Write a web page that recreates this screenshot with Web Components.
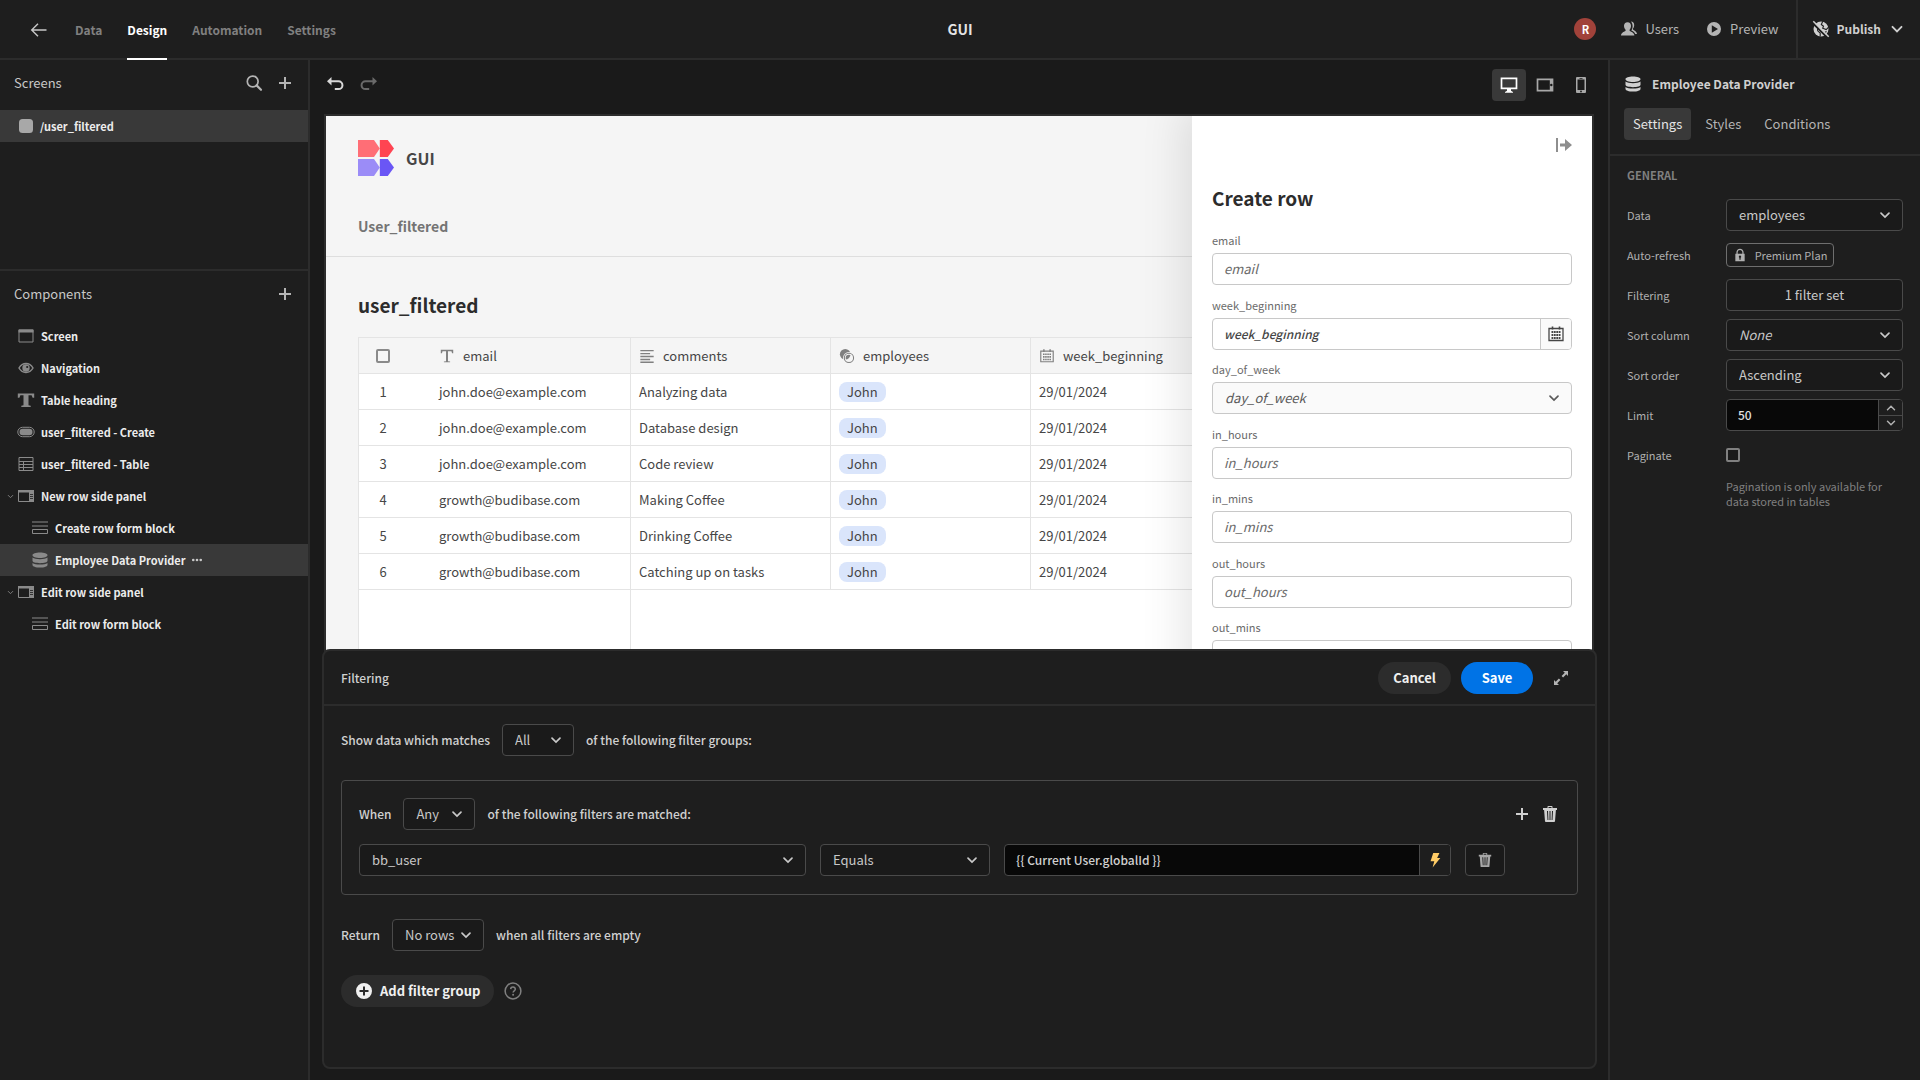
<!DOCTYPE html>
<html lang="en">
<head>
<meta charset="utf-8">
<title>GUI - Design</title>
<style>
  html, body { height: 100%; margin: 0; }
  body { background: #1a1a1a; color: #c8c8c8; font: 400 13px/20px "Noto Sans CJK SC", "Noto Sans", sans-serif; overflow: hidden; }
</style>
</head>
<body>
<builder-app></builder-app>
<script>
const base = `
  *, *::before, *::after { box-sizing: border-box; }
  button, input, select { font: inherit; color: inherit; margin: 0; }
  button { background: none; border: 0; padding: 0; display: inline-flex; align-items: center; justify-content: center; }
  a { color: inherit; text-decoration: none; }
  h1, h2, h3, p { margin: 0; font: inherit; }
  bb-icon { flex: none; }
`;
function define(name, render) {
  customElements.define(name, class extends HTMLElement {
    connectedCallback() {
      if (this.shadowRoot) return;
      const root = this.attachShadow({ mode: 'open' });
      root.innerHTML = `<style>${base}</style>` + render(this);
    }
  });
}

/* Icons, drawn on an 18 x 18 grid */
const icons = {
  back: '<path d="M16.5 9H2M8 2.7 1.7 9 8 15.3" fill="none" stroke="currentColor" stroke-width="1.4"/>',
  search: '<circle cx="7.7" cy="7.5" r="5.4" fill="none" stroke="currentColor" stroke-width="1.7"/><path d="m11.6 11.4 4.4 4.4" stroke="currentColor" stroke-width="2.2" stroke-linecap="round"/>',
  plus: '<path d="M9 3v12M3 9h12" stroke="currentColor" stroke-width="2"/>',
  undo: '<path d="M4 5.200h8.500a3.900 3.900 0 0 1 0 7.900H8.800" fill="none" stroke="currentColor" stroke-width="2"/><path d="M5.500 1v8.400L1 5.200z" fill="currentColor"/>',
  redo: '<path d="M14 5.200H5.500a3.900 3.900 0 0 0 0 7.900h3.700" fill="none" stroke="currentColor" stroke-width="2"/><path d="M12.500 1v8.400L17 5.200z" fill="currentColor"/>',
  square: '<rect x="2" y="2" width="14" height="14" rx="3.5" fill="currentColor"/>',
  screen: '<path d="M2 3h14v12H2z" fill="none" stroke="currentColor"/><path d="M1.5 2.5h15v3h-15z" fill="currentColor"/>',
  eye: '<path d="M2 9c3.4-6 10.600-6 14 0-3.4 6-10.600 6-14 0z" fill="none" stroke="currentColor" stroke-width="1.500"/><circle cx="9" cy="9" r="3.700" fill="currentColor"/><circle cx="10.200" cy="8" r="1.100" fill="#1e1e1e"/>',
  heading: '<path d="M.800 2.500h16.400v4.200h-1.600L14.600 4.300H11.500v10l2.200.5V16H4.300v-1.200l2.200-.5v-10H3.400L2.400 6.700H.800z" fill="currentColor"/>',
  pill: '<rect x=".800" y="4.300" width="16.400" height="9.400" rx="4.700" fill="none" stroke="currentColor"/><rect x="2.500" y="5.800" width="13" height="6.400" rx="3.200" fill="currentColor"/>',
  table: '<path d="M2 2.500h14v13H2zM2 6.500h14M2 9.500h14M2 12.500h14M6.500 6.500v9" fill="none" stroke="currentColor"/>',
  sidepanel: '<path d="M1.500 3.500h15v11h-15z" fill="none" stroke="currentColor"/><path d="M1 3h16v2.500H1zM12 3h5v12h-5z" fill="currentColor"/><path d="M13 7.500h3M13 9.500h3M13 11.500h3" stroke="#1e1e1e" stroke-width=".8"/>',
  form: '<path d="M1 3h16M1 7h16" stroke="currentColor"/><path d="M1.500 10.500h15v4h-15z" fill="none" stroke="currentColor"/>',
  data: '<path d="M1.500 4.200c0-1.600 3.200-2.700 7.500-2.700s7.500 1.100 7.500 2.700S13.300 6.900 9 6.900 1.500 5.800 1.500 4.200zM1.500 6.600c1.500 1.300 4.300 1.700 7.500 1.700s6-.4 7.500-1.700v3.200c0 1.400-3.300 2.400-7.500 2.400s-7.500-1-7.500-2.400zM1.500 11.900c1.500 1.300 4.300 1.700 7.500 1.700s6-.4 7.500-1.700V14c0 1.500-3.300 2.600-7.500 2.600S1.500 15.500 1.500 14z" fill="currentColor"/>',
  more: '<g fill="currentColor"><circle cx="4.200" cy="9" r="1.700"/><circle cx="9" cy="9" r="1.700"/><circle cx="13.800" cy="9" r="1.700"/></g>',
  down: '<path d="m4.500 6.800 4.500 4.500 4.500-4.500" fill="none" stroke="currentColor" stroke-width="1.900" stroke-linecap="round"/>',
  up: '<path d="m4.500 11.300 4.500-4.500 4.500 4.500" fill="none" stroke="currentColor" stroke-width="1.900" stroke-linecap="round"/>',
  users: '<path d="M7.500 2.200c2.300 0 3.500 1.500 3.500 3.600 0 1.800-.6 3-1.400 3.900v1.100c.2.700 4.600 1.300 4.800 4.700H1c.2-3.400 4.300-4 4.600-4.700V9.700C4.700 8.800 4 7.600 4 5.800c0-2.100 1.300-3.600 3.500-3.600z" fill="currentColor"/><path d="M11 1.400c2 .1 3.200 1.500 3.200 3.500 0 1.500-.5 2.800-1.200 3.600v1c.4.700 3.800 1.500 4 4.500h-1.800c-.6-1.800-2.400-2.800-3.900-3.400.9-1.300 1.300-2.800 1.300-4.500 0-1.900-.6-3.400-1.600-4.700z" fill="currentColor"/>',
  play: '<path fill-rule="evenodd" d="M9 2a7 7 0 1 0 0 14A7 7 0 0 0 9 2zM6.800 5.200 13 9l-6.200 3.800z" fill="currentColor"/>',
  globe: '<path d="M9 1.500a7.500 7.500 0 1 0 0 15 7.500 7.500 0 0 0 0-15z" fill="currentColor"/><path d="M10.800 1.300 9.300 4.500l2.200 1.700-.8 2 3.500 1.400 2.400-2.500M2 4.800l3.500 3 .2 3 2.500 2.200v3.500M12 13l2.500-1.500" fill="none" stroke="#1e1e1e" stroke-width="1.100"/><path d="m1 3.200 14 14" stroke="#1e1e1e" stroke-width="2"/><path d="m1.300 1.300 15.400 15.400" stroke="currentColor" stroke-width="1.500"/>',
  desktop: '<path d="M1.500 2.300h15v10h-15z" fill="none" stroke="currentColor" stroke-width="1.700"/><path d="M7 12.500h4v2.300l2 1.200v.8H5V16l2-1.200z" fill="currentColor"/>',
  tablet: '<path d="M1.500 3.300h15v11.400h-15z" fill="none" stroke="currentColor" stroke-width="1.700"/><path d="M13.800 3h3v12h-3z" fill="currentColor"/><circle cx="15.300" cy="9" r="1.200" fill="#1a1a1a"/>',
  phone: '<path fill-rule="evenodd" d="M5 1h8a1 1 0 0 1 1 1v14a1 1 0 0 1-1 1H5a1 1 0 0 1-1-1V2a1 1 0 0 1 1-1zm.5 2.600v10.300h7V3.600zM7.500 2h3v.8h-3zM9 14.600a.9.9 0 1 0 0 1.800.9.9 0 0 0 0-1.800z" fill="currentColor"/>',
  close: '<path d="M2 2h2v14H2zM6 7.500h5V3l7 6-7 6v-4.500H6z" fill="currentColor"/>',
  lock: '<path d="M5.200 8V5.600a3.800 3.800 0 0 1 7.600 0V8" fill="none" stroke="currentColor" stroke-width="1.600"/><path fill-rule="evenodd" d="M3 7.500h12V17H3zm6 2.200a1.500 1.500 0 0 0-.8 2.800V15h1.600v-2.500a1.500 1.500 0 0 0-.8-2.800z" fill="currentColor"/>',
  text: '<path d="M2 2h14v3.800h-1.300L14 3.600h-3.900v11.200l2.400.4V16H5.500v-.8l2.400-.4V3.600H4l-.7 2.200H2z" fill="currentColor"/>',
  lines: '<path d="M1.500 3h15M1.500 6.300h11M1.500 9.600h15M1.500 12.900h11M1.500 16h15" stroke="currentColor" stroke-width="1.500"/>',
  link: '<circle cx="7" cy="7" r="6" fill="currentColor"/><circle cx="11.200" cy="11.200" r="5.200" fill="none" stroke="#f5f5f5" stroke-width="3"/><circle cx="11.200" cy="11.200" r="5.200" fill="none" stroke="currentColor" stroke-width="1.200"/>',
  calendar: '<path d="M2 3.500h14v12H2z" fill="none" stroke="currentColor" stroke-width="1.300"/><path d="M5.500 1.500v3M12.500 1.500v3" stroke="currentColor" stroke-width="1.600"/><path d="M4.500 7h9M4.500 10h9M4.500 13h9" stroke="currentColor" stroke-width="1.800" stroke-dasharray="1.800 .6"/>',
  expand: '<path d="M11 2h5v5l-1.700-1.700-3.200 3.200-1.500-1.500 3.200-3.200zM7 16H2v-5l1.700 1.700 3.200-3.200 1.500 1.500-3.200 3.200z" fill="currentColor"/>',
  trash: '<path fill-rule="evenodd" d="M6.500 3V1.800c0-.5.3-.8.8-.8h3.400c.5 0 .8.300.8.800V3H16v2h-1.100l-.9 11.200a.9.9 0 0 1-.9.800H4.900a.9.9 0 0 1-.9-.8L3.100 5H2V3zm1 0h3V2h-3zM6 6l.5 9h.9L7 6zm2.500 0v9h1V6zM11 6l-.4 9h.9L12 6z" fill="currentColor"/>',
  bolt: '<path d="M7 1h7l-2.600 5.700H15L6.300 17.500l1.900-7.200H4z" fill="currentColor"/>',
  addcircle: '<path fill-rule="evenodd" d="M9 1a8 8 0 1 0 0 16A8 8 0 0 0 9 1zM8 4.500h2V8h3.500v2H10v3.500H8V10H4.500V8H8z" fill="currentColor"/>',
  help: '<circle cx="9" cy="9" r="7.900" fill="none" stroke="currentColor" stroke-width="1.500"/><path d="M6.700 7.100c.1-2.800 4.700-2.700 4.600.1 0 1.500-2.200 1.700-2.200 3.300" fill="none" stroke="currentColor" stroke-width="1.500"/><circle cx="9.100" cy="12.700" r="1" fill="currentColor"/>',
  logo: '<path d="M0 0h8l2.900 4.300L8 8.500H0z" fill="#ff6e76"/><path d="M10.900 0h4L18 4.300l-3.100 4.200h-4z" fill="#ff4452"/><path d="M0 9.500h8l2.900 4.300L8 18H0z" fill="#9b8cf7"/><path d="M10.900 9.500h4l3.100 4.300-3.100 4.200h-4z" fill="#6a56f5"/>'
};
define('bb-icon', el => {
  const s = el.getAttribute('size') || 18;
  return `<style>:host{display:inline-flex;width:${s}px;height:${s}px}</style>
  <svg viewBox="0 0 18 18" width="${s}" height="${s}" aria-hidden="true">${icons[el.getAttribute('name')]}</svg>`;
});

/* Drop-down: <ui-select value="All" name="accessible name"> */
const selectCss = `
  .pick { position: relative; display: block; min-width: 0; flex: 1; color: #c8c8c8; }
  .pick select { appearance: none; display: block; width: 100%; height: 32px; padding: 0 22px 0 12px; background: #1a1a1a; border: 1px solid #4a4a4a; border-radius: 4px; outline: 0; }
  .pick bb-icon { position: absolute; right: 10px; top: 8px; pointer-events: none; }
  .pick.italic select { font-style: italic; }
`;
const pick = (id, value, name, italic) => `<span class="pick${italic ? ' italic' : ''}"><select id="${id}" ${name ? `aria-label="${name}"` : ''}><option>${value}</option></select><bb-icon name="down" size="16"></bb-icon></span>`;
define('ui-select', el => `<style>${selectCss} :host{display:block;min-width:0}</style>${pick('s', el.getAttribute('value'), el.getAttribute('name'))}`);

define('top-bar', () => `
<style>
  :host { display: grid; grid-template-columns: 1fr auto 1fr; align-items: stretch; height: 60px; background: #1e1e1e; border-bottom: 2px solid #2c2c2c; }
  nav { display: flex; gap: 25px; padding-left: 30px; font-size: 12px; font-weight: 700; color: #808080; }
  nav a { display: flex; align-items: center; margin-bottom: -2px; }
  nav a.back { margin-right: 2px; color: #c8c8c8; }
  nav a[aria-current] { color: #fff; border-bottom: 2px solid #fff; padding-top: 2px; }
  h1 { align-self: center; font-size: 14px; font-weight: 700; color: #e4e4e4; }
  .right { display: flex; justify-content: flex-end; align-items: stretch; }
  .right button { gap: 7px; }
  .avatar { align-self: center; width: 22px; height: 22px; border-radius: 50%; background: #a1423a; color: #fff; font-size: 11px; font-weight: 700; line-height: 22px; text-align: center; margin-right: 24px; }
  .users { margin-right: 26px; color: #b4b4b4; } .preview { margin-right: 17px; color: #b4b4b4; }
  .publish { border-left: 2px solid #2c2c2c; padding: 0 14px; font-size: 12px; font-weight: 700; color: #d0d0d0; }
</style>
<nav><a class="back" href="#" aria-label="Back"><bb-icon name="back"></bb-icon></a><a href="#">Data</a><a href="#" aria-current="page">Design</a><a href="#">Automation</a><a href="#">Settings</a></nav>
<h1>GUI</h1>
<div class="right"><span class="avatar">R</span>
<button class="users"><bb-icon name="users"></bb-icon>Users</button>
<button class="preview"><bb-icon name="play"></bb-icon>Preview</button>
<button class="publish"><bb-icon name="globe"></bb-icon>Publish<bb-icon name="down"></bb-icon></button></div>`);

define('tree-item', el => `
<style>
  :host { display: flex; align-items: center; height: 32px; padding-left: 6px; font-size: 11px; font-weight: 700; color: #ececec; }
  :host([selected]) { background: #393939; }
  .chev { width: 11px; display: inline-flex; margin-right: ${el.hasAttribute('child') ? 14 : 0}px; color: #808080; }
  .ic { color: #8a8a8a; margin-right: 6px; }
  :host([screen]) .ic { color: #a8a8a8; margin-right: 5px; }
  .more { margin-left: 4px; color: #c8c8c8; }
</style>
<span class="chev">${el.hasAttribute('open') ? '<bb-icon name="down" size="9"></bb-icon>' : ''}</span>
<bb-icon class="ic" name="${el.getAttribute('icon')}"></bb-icon><slot></slot>
${el.hasAttribute('more') ? '<button class="more" aria-label="More actions"><bb-icon name="more" size="14"></bb-icon></button>' : ''}`);

define('left-panel', () => `
<style>
  :host { display: flex; flex-direction: column; width: 310px; background: #1e1e1e; border-right: 2px solid #2c2c2c; }
  header { display: flex; align-items: center; gap: 13px; padding: 0 14px; color: #c8c8c8; }
  header h2 { flex: 1; }
  header button { color: #b4b4b4; }
  .screens { height: 211px; border-bottom: 2px solid #2c2c2c; }
  .screens header { height: 50px; padding-bottom: 4px; }
  .tree { padding-top: 1px; }
  .components header { height: 48px; padding-bottom: 2px; }
</style>
<section class="screens"><header><h2>Screens</h2><button aria-label="Search screens"><bb-icon name="search"></bb-icon></button><button aria-label="Add screen"><bb-icon name="plus"></bb-icon></button></header>
<tree-item icon="square" selected screen>/user_filtered</tree-item></section>
<section class="components"><header><h2>Components</h2><button aria-label="Add component"><bb-icon name="plus"></bb-icon></button></header>
<div class="tree">
<tree-item icon="screen">Screen</tree-item>
<tree-item icon="eye">Navigation</tree-item>
<tree-item icon="heading">Table heading</tree-item>
<tree-item icon="pill">user_filtered - Create</tree-item>
<tree-item icon="table">user_filtered - Table</tree-item>
<tree-item icon="sidepanel" open>New row side panel</tree-item>
<tree-item icon="form" child>Create row form block</tree-item>
<tree-item icon="data" child selected more>Employee Data Provider</tree-item>
<tree-item icon="sidepanel" open>Edit row side panel</tree-item>
<tree-item icon="form" child>Edit row form block</tree-item>
</div></section>`);

define('canvas-toolbar', () => `
<style>
  :host { box-sizing: border-box; display: flex; align-items: center; height: 54px; padding: 0 10px 4px 16px; }
  .undo { color: #d8d8d8; margin-right: 16px; } .redo { color: #6a6a6a; margin-right: auto; }
  .devices { display: flex; gap: 2px; color: #a8a8a8; }
  .devices button { width: 34px; height: 32px; border-radius: 4px; }
  .devices [aria-pressed=true] { background: #393939; color: #fff; }
</style>
<button class="undo" aria-label="Undo"><bb-icon name="undo"></bb-icon></button><button class="redo" aria-label="Redo"><bb-icon name="redo"></bb-icon></button>
<div class="devices"><button aria-label="Desktop" aria-pressed="true"><bb-icon name="desktop"></bb-icon></button><button aria-label="Tablet"><bb-icon name="tablet"></bb-icon></button><button aria-label="Mobile"><bb-icon name="phone"></bb-icon></button></div>`);

const rows = [['john.doe@example.com', 'Analyzing data'], ['john.doe@example.com', 'Database design'], ['john.doe@example.com', 'Code review'], ['growth@budibase.com', 'Making Coffee'], ['growth@budibase.com', 'Drinking Coffee'], ['growth@budibase.com', 'Catching up on tasks']];
define('data-grid', () => `
<style>
  :host { display: flex; flex-direction: column; flex: 1; background: #fff; border: solid #e4e4e4; border-width: 1px 0 0 1px; color: #464646; }
  table { width: 100%; table-layout: fixed; border-spacing: 0; }
  th, td { height: 36px; padding: 0 8px; text-align: left; font-weight: 400; border: solid #e4e4e4; border-width: 0 1px 1px 0; white-space: nowrap; }
  thead th { background: #f5f5f5; }
  tr > :first-child { border-right: 0; padding: 0; }
  .no { display: block; width: 48px; text-align: center; }
  thead .no { display: flex; justify-content: center; }
  input { appearance: none; width: 14px; height: 14px; border: 2px solid #8a8a8a; border-radius: 2px; background: #f5f5f5; }
  .h { display: flex; align-items: center; gap: 8px; }
  .h bb-icon { color: #808080; }
  .tag { display: inline-block; height: 20px; line-height: 20px; padding: 0 8px; border-radius: 8px; background: #dae5fb; vertical-align: middle; }
  .rest { flex: 1; width: 272px; border-right: 1px solid #e4e4e4; }
</style>
<table><colgroup><col style="width:72px"><col style="width:200px"><col style="width:200px"><col style="width:200px"><col></colgroup>
<thead><tr><th><span class="no"><input type="checkbox" aria-label="Select all rows"></span></th>
<th><span class="h"><bb-icon name="text" size="16"></bb-icon>email</span></th><th><span class="h"><bb-icon name="lines" size="16"></bb-icon>comments</span></th><th><span class="h"><bb-icon name="link" size="16"></bb-icon>employees</span></th><th><span class="h"><bb-icon name="calendar" size="16"></bb-icon>week_beginning</span></th></tr></thead>
<tbody>${rows.map((r, i) => `<tr><td><span class="no">${i + 1}</span></td><td>${r[0]}</td><td>${r[1]}</td><td><span class="tag">John</span></td><td>29/01/2024</td></tr>`).join('')}</tbody></table>
<div class="rest"></div>`);

define('form-field', el => {
  const n = el.getAttribute('name'), t = el.getAttribute('type') || 'text';
  const body = t === 'select' ? pick('f', n, '', true)
    : `<span class="box"><input id="f" class="${t}" placeholder="${n}">${t === 'date' ? '<button aria-label="Open calendar"><bb-icon name="calendar"></bb-icon></button>' : ''}</span>`;
  return `<style>${selectCss}
  :host { display: flex; flex-direction: column; flex: 1; }
  label { height: 24px; font-size: 11px; line-height: 22px; color: #6a6a6a; }
  .box { display: flex; height: 32px; background: #fff; border: 1px solid #c8c8c8; border-radius: 4px; overflow: hidden; }
  input { flex: 1; min-width: 0; border: 0; outline: 0; padding: 0 11px; background: none; font-style: italic; }
  input::placeholder { color: #6a6a6a; opacity: 1; }
  input.date { font-size: 12px; font-weight: 500; } input.date::placeholder { color: #464646; }
  .box button { width: 31px; border-left: 1px solid #c8c8c8; background: #fafafa; color: #464646; }
  .pick { flex: none; color: #5a5a5a; } .pick select { background: #fafafa; border-color: #c8c8c8; }
  </style><label for="f">${n}</label>${body}`;
});

define('row-panel', () => `
<style>
  :host { box-sizing: border-box; display: flex; flex-direction: column; width: 400px; padding: 20px; background: #fff; color: #464646; box-shadow: 0 0 40px 10px rgba(0,0,0,.1); }
  .x { align-self: flex-end; color: #8e8e8e; }
  h2 { font-size: 19px; line-height: 32px; font-weight: 700; color: #2c2c2c; margin: 28px 0 15px; }
  .fields { display: flex; flex-direction: column; height: 452px; flex: none; }
</style>
<button class="x" aria-label="Close panel"><bb-icon name="close"></bb-icon></button>
<h2>Create row</h2>
<div class="fields"><form-field name="email"></form-field><form-field name="week_beginning" type="date"></form-field><form-field name="day_of_week" type="select"></form-field><form-field name="in_hours"></form-field><form-field name="in_mins"></form-field><form-field name="out_hours"></form-field><form-field name="out_mins"></form-field></div>`);

define('app-preview', () => `
<style>
  :host { display: flex; flex-direction: column; flex: 1; position: relative; overflow: hidden; margin: 0 14px 24px; border: 2px solid #2c2c2c; background: #f5f5f5; color: #464646; }
  header { height: 141px; padding: 24px 32px 0; border-bottom: 1px solid #dedede; }
  .brand { display: flex; align-items: center; gap: 12px; height: 36px; font-size: 16px; font-weight: 700; }
  .link { display: block; margin-top: 39px; font-size: 14px; line-height: 22px; font-weight: 700; color: #747474; }
  h2 { padding: 32px 32px 0; font-size: 19px; line-height: 32px; height: 80px; font-weight: 700; color: #2c2c2c; }
  data-grid { margin: 0 32px; }
  row-panel { position: absolute; top: 0; right: 0; bottom: 0; }
</style>
<header><div class="brand"><bb-icon name="logo" size="36"></bb-icon><span>GUI</span></div><a class="link" href="#">User_filtered</a></header>
<h2>user_filtered</h2><data-grid></data-grid><row-panel></row-panel>`);

define('filter-drawer', () => `
<style>
  :host { box-sizing: border-box; display: flex; flex-direction: column; height: 420px; background: #1e1e1e; border: 2px solid #2c2c2c; border-radius: 8px; color: #d0d0d0; font-size: 12px; font-weight: 500; }
  header { display: flex; align-items: center; height: 55px; padding: 0 25px 0 17px; border-bottom: 2px solid #2c2c2c; }
  header h2 { flex: 1; }
  .btn { height: 32px; border-radius: 16px; padding: 0 15px; font-size: 13px; font-weight: 700; color: #f0f0f0; background: #2c2c2c; }
  .cancel { width: 73px; margin-right: 10px; } .save { width: 72px; background: #0073e6; color: #fff; margin-right: 19px; }
  .expand { color: #b4b4b4; }
  .body { display: flex; flex-direction: column; align-items: flex-start; padding: 18px 17px 0 17px; }
  .line { display: flex; align-items: center; gap: 12px; height: 32px; }
  ui-select { font-size: 13px; font-weight: 400; }
  .w72 { width: 72px; } .w92 { width: 92px; }
  .group { align-self: stretch; margin: 24px 0; padding: 17px; height: 115px; border: 1px solid #4a4a4a; border-radius: 4px; }
  .group .acts { display: flex; gap: 10px; margin-left: auto; padding-right: 1px; color: #d0d0d0; }
  .filter { display: grid; grid-template-columns: 1fr 170px 1fr 40px; gap: 14px; margin: 14px 55px 0 0; }
  .bind { display: flex; height: 32px; border: 1px solid #4a4a4a; border-radius: 4px; overflow: hidden; background: #080808; }
  .bind input { flex: 1; min-width: 0; border: 0; outline: 0; background: none; padding: 0 11px; }
  .bind button { width: 31px; border-left: 1px solid #4a4a4a; background: #1e1e1e; color: #ffcc66; }
  .del { border: 1px solid #4a4a4a; border-radius: 4px; color: #a8a8a8; background: #1a1a1a; }
  .add { gap: 7px; padding: 0 14px; }
  .foot { display: flex; align-items: center; gap: 10px; margin-top: 24px; } .foot .help { color: #808080; }
</style>
<header><h2>Filtering</h2><button class="btn cancel">Cancel</button><button class="btn save">Save</button><button class="expand" aria-label="Expand"><bb-icon name="expand"></bb-icon></button></header>
<div class="body">
<div class="line"><span>Show data which matches</span><ui-select class="w72" value="All" name="Group match"></ui-select><span>of the following filter groups:</span></div>
<div class="group"><div class="line"><span>When</span><ui-select class="w72" value="Any" name="Filter match"></ui-select><span>of the following filters are matched:</span>
<span class="acts"><button aria-label="Add filter"><bb-icon name="plus"></bb-icon></button><button aria-label="Delete group"><bb-icon name="trash"></bb-icon></button></span></div>
<div class="filter"><ui-select value="bb_user" name="Column"></ui-select><ui-select value="Equals" name="Operator"></ui-select>
<span class="bind"><input aria-label="Value" value="{{ Current User.globalId }}"><button aria-label="Bindings"><bb-icon name="bolt" size="16"></bb-icon></button></span>
<button class="del" aria-label="Delete filter"><bb-icon name="trash" size="16"></bb-icon></button></div></div>
<div class="line"><span>Return</span><ui-select class="w92" value="No rows" name="Empty behaviour"></ui-select><span>when all filters are empty</span></div>
<div class="foot"><button class="btn add"><bb-icon name="addcircle"></bb-icon>Add filter group</button><button class="help" aria-label="Help"><bb-icon name="help"></bb-icon></button></div>
</div>`);

define('setting-row', el => {
  const t = el.getAttribute('type'), v = el.getAttribute('value'), l = el.getAttribute('label');
  const c = {
    select: () => pick('c', v, '', el.hasAttribute('italic')),
    premium: () => `<button id="c" class="premium"><bb-icon name="lock" size="14"></bb-icon>${v}</button>`,
    button: () => `<button id="c" class="wide">${v}</button>`,
    number: () => `<span class="num"><input id="c" inputmode="numeric" value="${v}"><span class="step"><button aria-label="Increase"><bb-icon name="up" size="14"></bb-icon></button><button aria-label="Decrease"><bb-icon name="down" size="14"></bb-icon></button></span></span>`,
    check: () => `<input id="c" class="check" type="checkbox">`
  }[t]();
  return `<style>${selectCss}
  :host { display: grid; grid-template-columns: 99px 1fr; align-items: center; height: 40px; }
  label { font-size: 11px; color: #b0b0b0; }
  .premium { justify-self: start; width: 108px; height: 24px; gap: 8px; border: 1px solid #6e6e6e; border-radius: 4px; font-size: 11px; color: #b0b0b0; }
  .wide { height: 32px; background: #1a1a1a; border: 1px solid #4a4a4a; border-radius: 4px; }
  .num { display: flex; height: 32px; border: 1px solid #4a4a4a; border-radius: 4px; background: #080808; overflow: hidden; }
  .num input { flex: 1; min-width: 0; border: 0; outline: 0; background: none; padding: 0 11px; font-size: 12px; font-weight: 500; color: #e0e0e0; }
  .step { display: grid; grid-template-rows: 1fr 1fr; width: 24px; border-left: 1px solid #4a4a4a; background: #1e1e1e; color: #b0b0b0; }
  .step button + button { border-top: 1px solid #4a4a4a; }
  .check { appearance: none; width: 14px; height: 14px; border: 2px solid #808080; border-radius: 2px; background: #1a1a1a; }
  </style><label for="c">${l}</label>${c}`;
});

define('settings-panel', () => `
<style>
  :host { box-sizing: border-box; display: block; width: 312px; background: #1e1e1e; border-left: 2px solid #2c2c2c; }
  .top { height: 96px; padding: 14px 14px 0; border-bottom: 2px solid #2c2c2c; }
  h2 { display: flex; align-items: center; gap: 10px; height: 20px; margin-bottom: 14px; font-size: 12px; font-weight: 700; color: #d0d0d0; }
  .tabs { display: flex; gap: 5px; color: #b4b4b4; }
  .tabs button { height: 32px; padding: 0 9px; border-radius: 4px; }
  .tabs [aria-selected=true] { background: #393939; color: #e4e4e4; }
  .general { padding: 0 17px; }
  h3 { font-size: 11px; line-height: 38px; height: 39px; font-weight: 700; color: #808080; }
  p { margin: 4px 0 0 99px; font-size: 11px; line-height: 15px; color: #808080; }
</style>
<div class="top"><h2><bb-icon name="data"></bb-icon>Employee Data Provider</h2>
<div class="tabs" role="tablist"><button role="tab" aria-selected="true">Settings</button><button role="tab">Styles</button><button role="tab">Conditions</button></div></div>
<div class="general"><h3>GENERAL</h3>
<setting-row label="Data" type="select" value="employees"></setting-row>
<setting-row label="Auto-refresh" type="premium" value="Premium Plan"></setting-row>
<setting-row label="Filtering" type="button" value="1 filter set"></setting-row>
<setting-row label="Sort column" type="select" value="None" italic></setting-row>
<setting-row label="Sort order" type="select" value="Ascending"></setting-row>
<setting-row label="Limit" type="number" value="50"></setting-row>
<setting-row label="Paginate" type="check"></setting-row>
<p>Pagination is only available for data stored in tables</p></div>`);

define('builder-app', () => `
<style>
  :host { display: flex; flex-direction: column; height: 100vh; }
  main { display: flex; flex: 1; min-height: 0; }
  .stage { position: relative; flex: 1; min-width: 0; display: flex; flex-direction: column; }
  top-bar, left-panel, settings-panel { box-sizing: border-box; flex: none; }
  filter-drawer { position: absolute; left: 12px; right: 11px; bottom: 11px; }
</style>
<top-bar></top-bar>
<main><left-panel></left-panel><div class="stage"><canvas-toolbar></canvas-toolbar><app-preview></app-preview><filter-drawer></filter-drawer></div><settings-panel></settings-panel></main>`);
</script>
</body>
</html>
